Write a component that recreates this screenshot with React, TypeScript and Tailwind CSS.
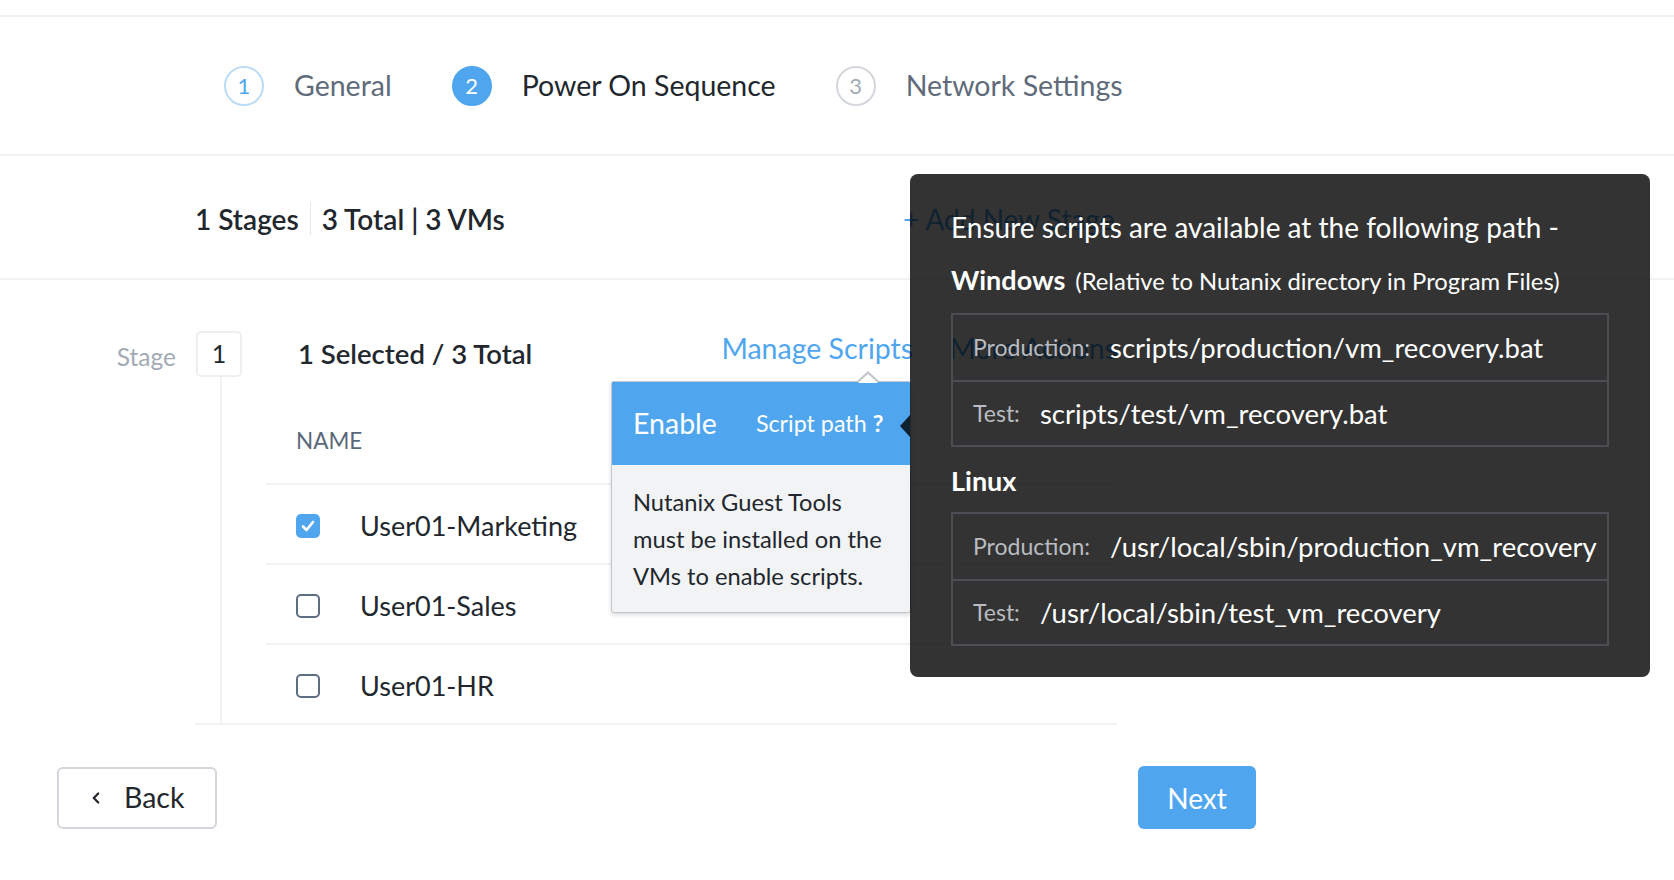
import { ChevronLeft } from "lucide-react"

const rows = [
  { name: "User01-Marketing", checked: true },
  { name: "User01-Sales", checked: false },
  { name: "User01-HR", checked: false },
]

function Step({ n, label, state }: { n: number; label: string; state: "done" | "active" | "todo" }) {
  const circle =
    state === "active"
      ? "bg-[#4fa6ef] border-[#4fa6ef] text-white"
      : state === "done"
      ? "border-[#bcdcf6] text-[#4fa6ef]"
      : "border-[#d3d7dc] text-[#a3abb5]"
  return (
    <div className="flex items-center gap-[30px]">
      <div className={`w-[40px] h-[40px] rounded-full border-2 flex items-center justify-center text-[22px] ${circle}`}>{n}</div>
      <span className={`text-[28.5px] ${state === "active" ? "text-[#22272e]" : "text-[#5f6b7a]"}`}>{label}</span>
    </div>
  )
}

function PathBox({ rows }: { rows: { label: string; value: string }[] }) {
  return (
    <div className="border-2 border-[#4b4e53] w-[658px]">
      {rows.map((r, i) => (
        <div key={r.label} className={`h-[65px] flex items-center pl-[20px] ${i > 0 ? "border-t-2 border-[#4b4e53]" : ""}`}>
          <span className="text-[23px] text-[#b9bcc0] mr-[20px]">{r.label}</span>
          <span className="text-[27.5px] text-white whitespace-nowrap">{r.value}</span>
        </div>
      ))}
    </div>
  )
}

export default function App() {
  return (
    <div className="relative w-[1674px] h-[880px] bg-white overflow-hidden font-['Lato',sans-serif]">
      <div className="h-[15px]" />
      <div className="h-[2px] bg-[#f2f2f2]" />

      {/* wizard steps */}
      <div className="h-[137px] flex items-center pl-[224px] gap-[60px]">
        <Step n={1} label="General" state="done" />
        <Step n={2} label="Power On Sequence" state="active" />
        <Step n={3} label="Network Settings" state="todo" />
      </div>
      <div className="h-[2px] bg-[#f2f2f2]" />

      {/* summary */}
      <div className="h-[122px] flex items-center pl-[195px] pt-[3px]">
        <div className="w-[708px] flex items-center">
          <span className="text-[28px] font-semibold text-[#22272e]">1 Stages</span>
          <span className="mx-[11px] w-px h-[33px] bg-[#e6e6e6]" />
          <span className="text-[28px] font-semibold text-[#22272e]">3 Total | 3 VMs</span>
        </div>
        <span className="text-[28px] text-[#4fa6ef]">+ Add New Stage</span>
      </div>
      <div className="h-[2px] bg-[#f2f2f2]" />

      {/* stage + vm table */}
      <div className="flex">
        <div className="w-[176px] pt-[63px] text-right text-[24.5px] text-[#a3abb5] leading-[28px]">Stage</div>
        <div className="ml-[19px] w-[922px] flex border-b-2 border-[#f2f2f2]">
          <div className="w-[71px] flex flex-col">
            <div className="mt-[51px] ml-px w-[46px] h-[46px] border-2 border-[#eeeff1] rounded-[5px] flex items-center justify-center text-[25px] text-[#22272e]">1</div>
            <div className="ml-[25px] w-[2px] flex-1 bg-[#f2f2f2]" />
          </div>
          <div className="flex-1">
            <div className="mt-[51px] h-[46px] flex items-center pl-[32px]">
              <span className="text-[27.5px] font-semibold text-[#22272e]">1 Selected / 3 Total</span>
              <div className="ml-auto flex items-center gap-[36px] -mt-[12px]">
                <span className="text-[28.5px] text-[#4fa6ef]">Manage Scripts</span>
                <span className="text-[28.5px] text-[#4fa6ef]">More Actions</span>
              </div>
            </div>
            <div className="h-[106px] pl-[30px] pt-[52px]">
              <span className="text-[22.5px] leading-[24px] text-[#5a6879] block">NAME</span>
            </div>
            {rows.map((r) => (
              <div key={r.name} className="h-[80px] border-t-2 border-[#f2f2f2] flex items-center pl-[30px] pt-[4px]">
                {r.checked ? (
                  <div className="w-[24px] h-[24px] rounded-[5px] bg-[#4fa6ef] flex items-center justify-center">
                    <svg width="14" height="12" viewBox="0 0 14 12">
                      <path d="M2 6.5 L5.5 10 L12 2" fill="none" stroke="white" strokeWidth="2.6" strokeLinecap="round" strokeLinejoin="round" />
                    </svg>
                  </div>
                ) : (
                  <div className="w-[24px] h-[24px] rounded-[5px] border-2 border-[#5e6e82]" />
                )}
                <span className="ml-[40px] text-[27px] text-[#22272e]">{r.name}</span>
              </div>
            ))}
          </div>
        </div>
      </div>

      {/* footer buttons */}
      <div className="flex items-center mt-[41px]">
        <button className="ml-[57px] w-[160px] h-[62px] border-2 border-[#d3d6da] rounded-[6px] flex items-center pl-[28px] text-[28.5px] text-[#22272e]">
          <ChevronLeft size={18} strokeWidth={3} className="mr-[19px]" />
          Back
        </button>
        <button className="ml-[921px] w-[118px] h-[63px] rounded-[6px] bg-[#4fa6ef] text-white text-[28px]">Next</button>
      </div>

      {/* enable scripts popover */}
      <div className="absolute left-[611px] top-[381px] w-[300px] h-[232px] border border-[#c3c7cc] rounded-[3px] bg-[#f2f3f5] shadow-[0_2px_4px_rgba(0,0,0,0.15)]">
        <div className="absolute left-[244px] -top-[11px] w-0 h-0 border-x-[12px] border-x-transparent border-b-[11px] border-b-[#c3c7cc]" />
        <div className="absolute left-[246px] -top-[8px] w-0 h-0 border-x-[10px] border-x-transparent border-b-[9px] border-b-white" />
        <div className="h-[83px] bg-[#4fa6ef] flex items-center pl-[21px] text-white">
          <span className="text-[28.5px]">Enable</span>
          <span className="ml-[39px] text-[23.3px]">Script path <b>?</b></span>
        </div>
        <div className="pl-[21px] pt-[19px] text-[23.7px] leading-[37px] text-[#22272e]">
          Nutanix Guest Tools
          <br />
          must be installed on the
          <br />
          VMs to enable scripts.
        </div>
      </div>

      {/* script path tooltip */}
      <div className="absolute left-[910px] top-[174px] w-[740px] h-[503px] rounded-[8px] bg-[rgba(0,0,0,0.8)] pl-[41px] pt-[35px]">
        <div className="absolute -left-[10px] top-[241px] w-0 h-0 border-y-[11px] border-y-transparent border-r-[10px] border-r-[rgba(0,0,0,0.8)]" />
        <div className="text-[28px] text-white leading-[36px]">Ensure scripts are available at the following path -</div>
        <div className="mt-[17px] flex items-baseline text-white leading-[36px]">
          <span className="text-[27px] font-bold">Windows</span>
          <span className="ml-[10px] text-[23.8px]">(Relative to Nutanix directory in Program Files)</span>
        </div>
        <div className="mt-[14px]">
          <PathBox
            rows={[
              { label: "Production:", value: "scripts/production/vm_recovery.bat" },
              { label: "Test:", value: "scripts/test/vm_recovery.bat" },
            ]}
          />
        </div>
        <div className="mt-[16px] text-[27px] font-bold text-white leading-[36px]">Linux</div>
        <div className="mt-[13px]">
          <PathBox
            rows={[
              { label: "Production:", value: "/usr/local/sbin/production_vm_recovery" },
              { label: "Test:", value: "/usr/local/sbin/test_vm_recovery" },
            ]}
          />
        </div>
      </div>
    </div>
  )
}
